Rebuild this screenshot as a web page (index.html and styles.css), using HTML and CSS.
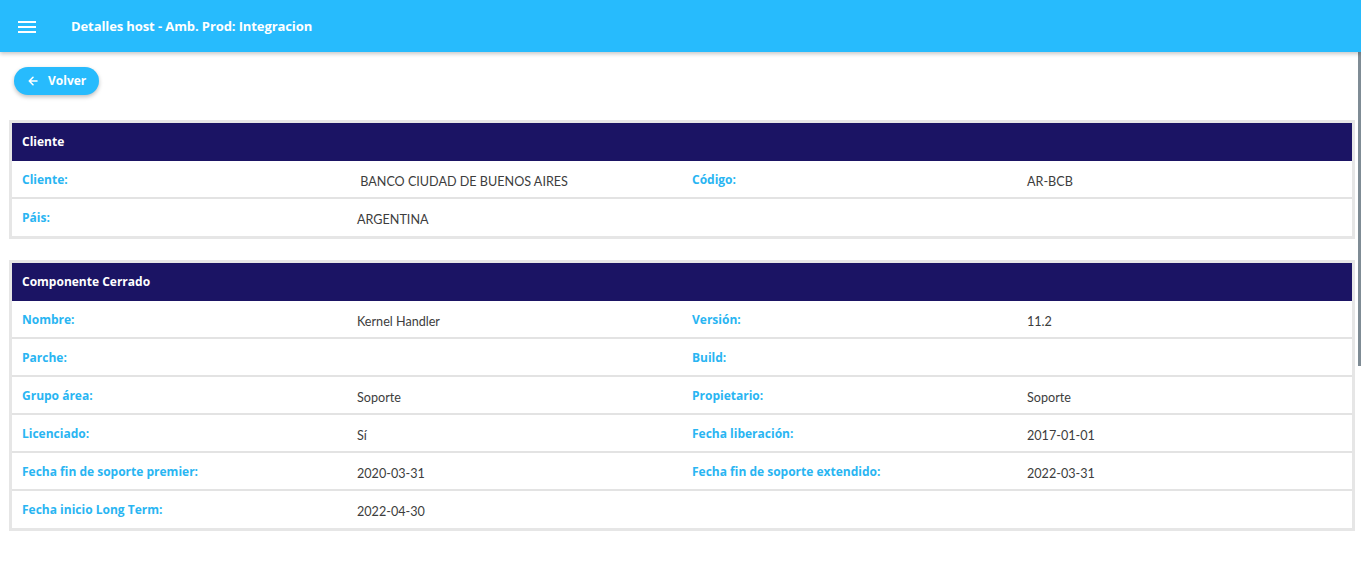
FILE: index.html
```html
<!DOCTYPE html>
<html lang="es">
<head>
<meta charset="utf-8">
<title>Detalles host</title>
<link rel="stylesheet" href="styles.css">
</head>
<body>
<header class="topbar">
  <button class="menu-btn" aria-label="Menú">
    <svg width="18" height="12" viewBox="0 0 18 12"><rect x="0" y="0" width="18" height="2" fill="#fff"/><rect x="0" y="5" width="18" height="2" fill="#fff"/><rect x="0" y="10" width="18" height="2" fill="#fff"/></svg>
  </button>
  <h1 class="title">Detalles host - Amb. Prod: Integracion</h1>
</header>
<main class="content">
  <div class="actions">
    <button class="back-btn">
      <svg width="10" height="10" viewBox="0 0 10 10"><path d="M9 5H1.5M5 1.3L1.3 5 5 8.7" stroke="#fff" stroke-width="1.6" fill="none" stroke-linecap="round" stroke-linejoin="round"/></svg>
      <span>Volver</span>
    </button>
  </div>

  <section class="card">
    <div class="card-head">Cliente</div>
    <div class="row">
      <div class="lbl">Cliente:</div><div class="val">&nbsp;BANCO CIUDAD DE BUENOS AIRES</div>
      <div class="lbl">Código:</div><div class="val">AR-BCB</div>
    </div>
    <div class="row">
      <div class="lbl">Páis:</div><div class="val">ARGENTINA</div>
      <div class="lbl"></div><div class="val"></div>
    </div>
  </section>

  <section class="card">
    <div class="card-head">Componente Cerrado</div>
    <div class="row">
      <div class="lbl">Nombre:</div><div class="val">Kernel Handler</div>
      <div class="lbl">Versión:</div><div class="val">11.2</div>
    </div>
    <div class="row">
      <div class="lbl">Parche:</div><div class="val"></div>
      <div class="lbl">Build:</div><div class="val"></div>
    </div>
    <div class="row">
      <div class="lbl">Grupo área:</div><div class="val">Soporte</div>
      <div class="lbl">Propietario:</div><div class="val">Soporte</div>
    </div>
    <div class="row">
      <div class="lbl">Licenciado:</div><div class="val">Sí</div>
      <div class="lbl">Fecha liberación:</div><div class="val">2017-01-01</div>
    </div>
    <div class="row">
      <div class="lbl">Fecha fin de soporte premier:</div><div class="val">2020-03-31</div>
      <div class="lbl">Fecha fin de soporte extendido:</div><div class="val">2022-03-31</div>
    </div>
    <div class="row">
      <div class="lbl">Fecha inicio Long Term:</div><div class="val">2022-04-30</div>
      <div class="lbl"></div><div class="val"></div>
    </div>
  </section>
  <div class="scroll-thumb"></div>
</main>
</body>
</html>
```

FILE: styles.css
```css
* { box-sizing: border-box; }
html, body { margin: 0; padding: 0; }
body {
  font-family: "Lato", "Noto Sans", sans-serif;
  background: #fff;
  color: #333;
  height: 572px;
  overflow: hidden;
}
.topbar {
  height: 52px;
  background: #27bbfd;
  display: flex;
  align-items: center;
  padding-left: 18px;
  box-shadow: 0 2px 4px rgba(0,0,0,0.22);
  position: relative;
  z-index: 2;
}
.menu-btn {
  background: none;
  border: 0;
  padding: 0;
  width: 18px;
  height: 12px;
  display: flex;
  margin-top: 1px;
}
.title {
  margin: 0 0 0 35px;
  font-family: "Open Sans", "Lato", sans-serif;
  font-size: 13px;
  font-weight: 700;
  color: #fff;
  letter-spacing: -0.1px;
}
.content {
  position: relative;
  height: 520px;
  padding: 15px 6px 0 9px;
}
.actions { padding-left: 5px; margin-bottom: 25px; }
.back-btn {
  height: 28px;
  width: 85px;
  border: 0;
  border-radius: 14px;
  background: #27bbfd;
  color: #fff;
  font-family: "Open Sans", "Lato", sans-serif;
  font-weight: 700;
  font-size: 12px;
  display: flex;
  align-items: center;
  gap: 10px;
  padding: 0 0 1px 14px;
  box-shadow: 0 2px 4px rgba(0,0,0,0.25);
}
.card {
  border: 3px solid #e6e6e6;
  margin-bottom: 21px;
  background: #fff;
}
.card-head {
  height: 38px;
  background: #1b1464;
  color: #fff;
  font-family: "Open Sans", "Lato", sans-serif;
  font-weight: 700;
  font-size: 12px;
  display: flex;
  align-items: center;
  padding-left: 10px;
  padding-bottom: 1px;
}
.row {
  display: grid;
  grid-template-columns: repeat(4, 1fr);
  height: 38px;
  border-bottom: 2px solid #e3e3e3;
  align-items: center;
}
.row:last-child { border-bottom: 0; height: 37px; }
.lbl {
  padding-left: 10px;
  color: #29b5f2;
  font-family: "Open Sans", "Lato", sans-serif;
  font-weight: 700;
  font-size: 12px;
  margin-top: 0;
}
.val {
  padding-left: 10px;
  font-size: 12.6px;
  color: #3d3d3d;
  margin-top: 4px;
}
.scroll-thumb {
  position: absolute;
  right: 0;
  top: 0;
  width: 3px;
  height: 314px;
  background: #7f8c95;
}
```
